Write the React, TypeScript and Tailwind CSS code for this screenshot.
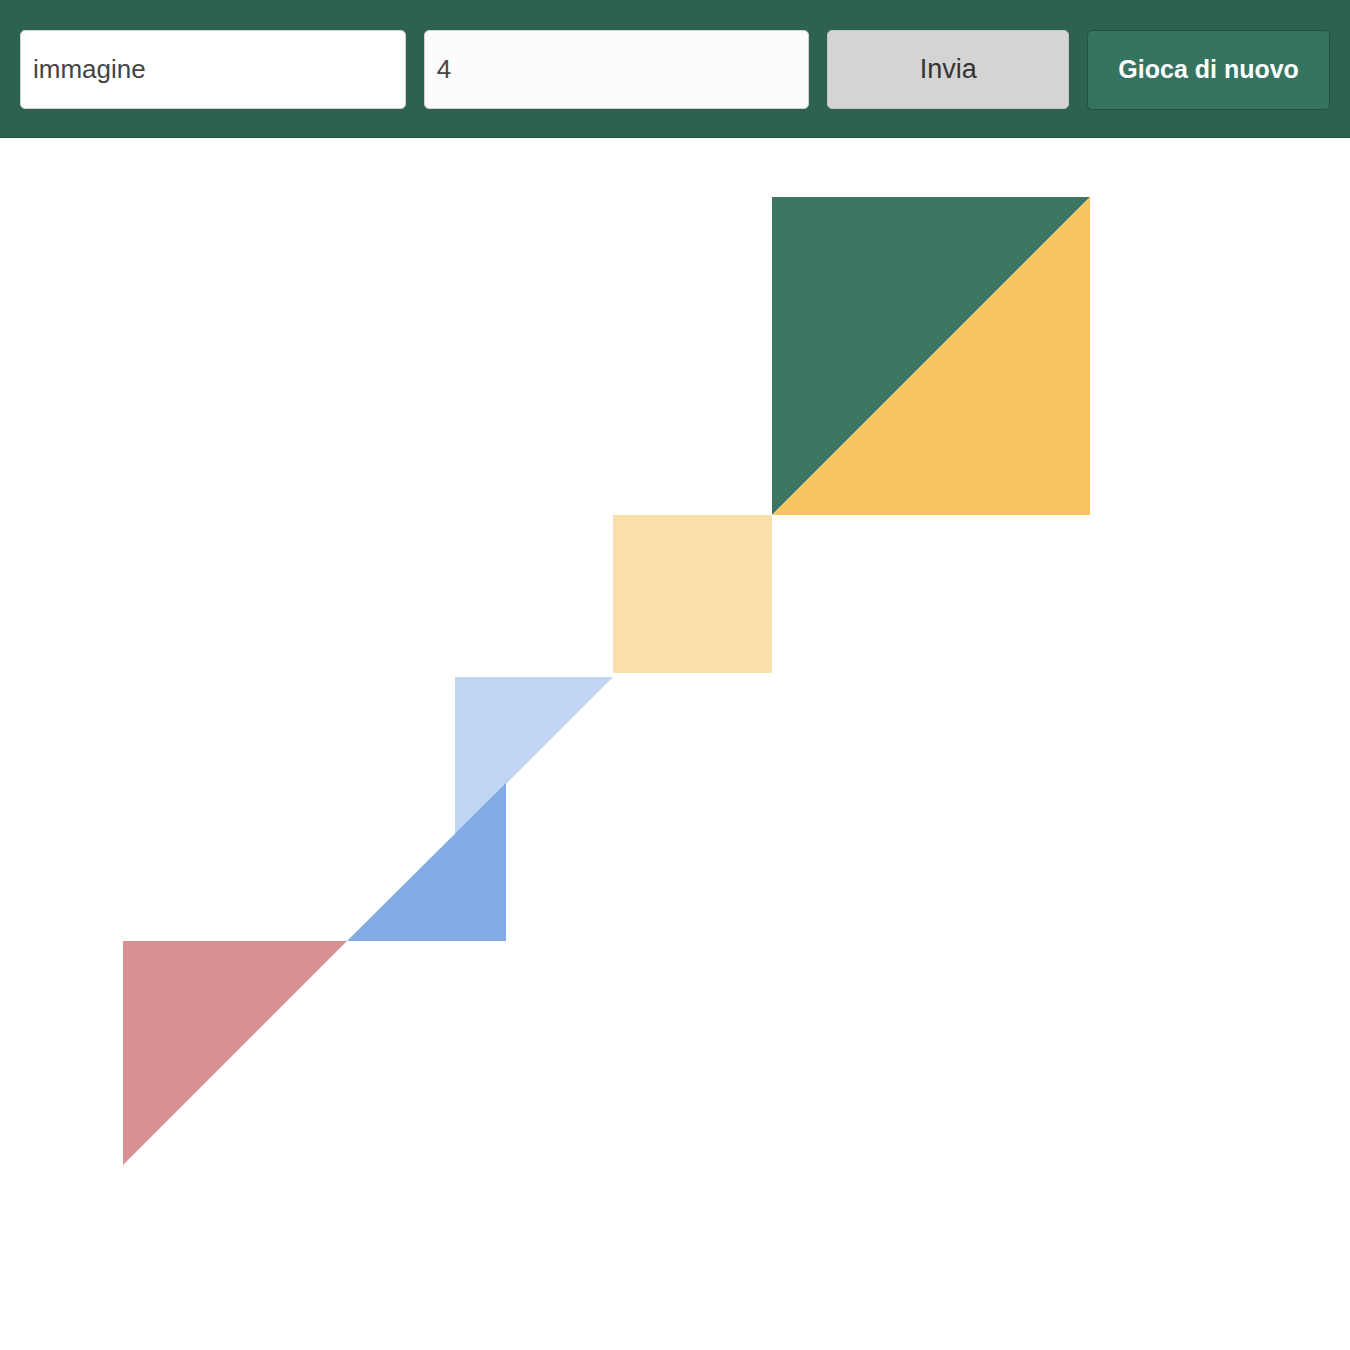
import React from 'react';

const font = { fontFamily: '"Liberation Sans", Arial, sans-serif' };

const pieces = [
  { points: '772,197 1090,197 772,515', fill: '#3a7662' },
  { points: '1090,197 1090,515 772,515', fill: '#f7c462' },
  { points: '613,515 772,515 772,673 613,673', fill: '#f9e0ab' },
  { points: '455,677 613,677 455,835', fill: '#c0d5f3' },
  { points: '506,783 506,941 347,941', fill: '#83abe5' },
  { points: '123,941 347,941 123,1165', fill: '#d89190' },
];

export default function App() {
  return (
    <div className="min-h-[1350px] bg-white" style={font}>
      <div className="flex items-center gap-[18px] h-[138px] px-5 pt-[2px] bg-[#2d6253] border-b border-[#1f4a3d]">
        <input
          defaultValue="immagine"
          className="w-[386px] h-[79px] rounded-[5px] bg-white border border-[#d0d0d0] px-3 text-[26px] text-[#444] outline-none"
        />
        <input
          defaultValue="4"
          className="w-[386px] h-[79px] rounded-[5px] bg-[#fcfcfc] border border-[#d0d0d0] px-3 text-[26px] text-[#444] outline-none"
        />
        <button className="w-[242px] h-[79px] rounded-[5px] bg-[#d4d4d4] border border-[#c4c4c4] text-[27px] text-[#333]">
          Invia
        </button>
        <button className="w-[243px] h-[80px] rounded-[5px] bg-[#357461] border border-[#24503f] text-[25px] font-bold text-white">
          Gioca di nuovo
        </button>
      </div>
      <svg width="1350" height="1212" viewBox="0 138 1350 1212" className="block">
        {pieces.map((p, i) => (
          <polygon key={i} points={p.points} fill={p.fill} />
        ))}
      </svg>
    </div>
  );
}
